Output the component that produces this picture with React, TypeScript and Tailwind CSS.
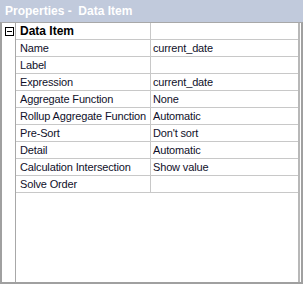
import React from "react";

const rows: [string, string][] = [
  ["Name", "current_date"],
  ["Label", ""],
  ["Expression", "current_date"],
  ["Aggregate Function", "None"],
  ["Rollup Aggregate Function", "Automatic"],
  ["Pre-Sort", "Don't sort"],
  ["Detail", "Automatic"],
  ["Calculation Intersection", "Show value"],
  ["Solve Order", ""],
];

export default function App() {
  return (
    <div
      className="w-[303px] h-[284px] bg-white flex flex-col text-[11px] text-[#10102a]"
      style={{ fontFamily: '"Liberation Sans", Arial, sans-serif' }}
    >
      <div className="h-[22px] shrink-0 bg-[#c1cadc] flex items-center pl-[5px] text-white font-bold text-[12px] whitespace-pre">
        Properties -  Data Item
      </div>
      <div className="flex-1 border-t border-[#a8a8a8] border-l-2 border-l-[#a0a0a0] border-b-2 border-b-[#a0a0a0] border-r-2 border-r-[#a0a0a0] flex">
        <div className="w-[13px] shrink-0 flex flex-col">
          <div className="h-[17px] flex items-center justify-center pl-[1px]">
            <div className="w-[9px] h-[9px] border border-black flex items-center justify-center">
              <div className="w-[5px] h-px bg-black" />
            </div>
          </div>
        </div>
        <div className="w-[285px] shrink-0 border-l border-[#a8a8a8] border-r-2 border-r-[#b8b8b8] self-stretch">
          <div className="grid grid-cols-[135px_1fr] tracking-[-0.15px]">
            <div className="h-[17px] flex items-center pl-[4px] font-bold text-[12px] text-black border-b border-[#c8c8c8] border-r tracking-normal">
              Data Item
            </div>
            <div className="h-[17px] border-b border-[#c8c8c8]" />
            {rows.map(([k, v]) => (
              <React.Fragment key={k}>
                <div className="h-[17px] flex items-center pl-[4px] border-b border-r border-[#c8c8c8] whitespace-nowrap">
                  {k}
                </div>
                <div className="h-[17px] flex items-center pl-[2px] border-b border-[#c8c8c8] whitespace-nowrap">
                  {v}
                </div>
              </React.Fragment>
            ))}
          </div>
        </div>
      </div>
    </div>
  );
}
